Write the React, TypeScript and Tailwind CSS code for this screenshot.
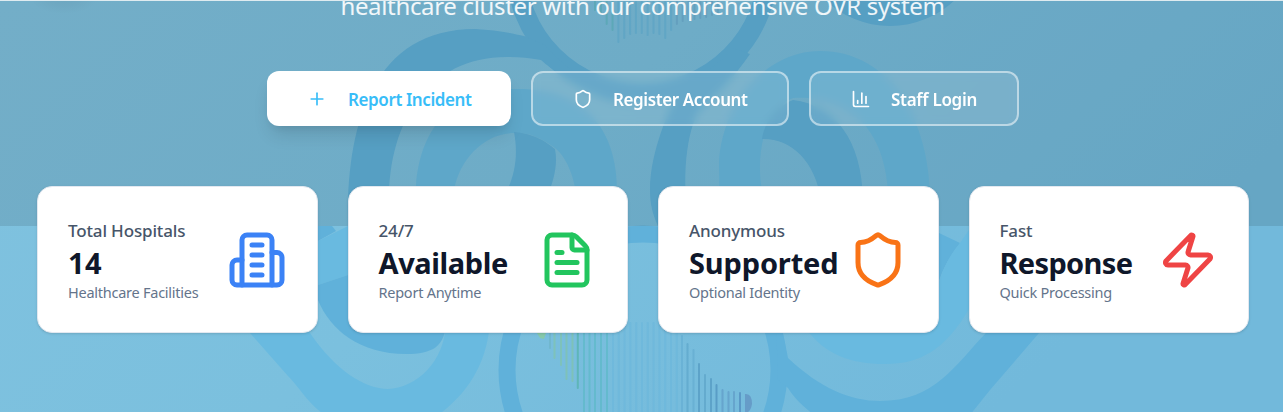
import type { ReactNode } from 'react';
import { ChartColumn, FileText, Plus, Shield, Zap } from 'lucide-react';

const DARK = '#60b1da';
const LIGHT = '#69bae0';

// [x, top, bottom, colour, opacity]
type Stripe = [number, number, number, string, number];

const upperEnds = [10, 12, 24, 30, 42, 38, 34, 33, 33, 35, 33, 34, 38, 30, 24, 21, 20, 19, 18, 17, 15, 13];
const upperStripes: Stripe[] = upperEnds.map((end, i) => [
  595 + i * 5.85,
  0,
  end,
  i < 4 ? '#4fb5b8' : i < 14 ? '#60b3da' : '#5793bd',
  i < 4 ? 0.45 : i < 14 ? 0.55 : 0.3,
]);

const lowerStripes: Stripe[] = [
  [550, 325, 348, '#6db3c8', 0.7],
  [554.5, 325, 358, '#80c3ac', 0.7],
  [561, 325, 365, '#80c3ac', 0.7],
  [566.5, 325, 379, '#80c3ac', 0.75],
  [572.5, 325, 381, '#80c3ac', 0.75],
  [577.8, 325, 388, '#5bb5b4', 0.9],
  ...[584, 589.5, 595, 601, 607].map((x): Stripe => [x, 325, 412, '#5db9c8', 0.75]),
  ...Array.from({ length: 12 }, (_, i): Stripe => [613 + i * 5.8, 323, 412, '#67b6db', 0.5]),
  [682, 336, 412, '#63acd2', 0.6],
  [687.5, 344, 412, '#5ca6cb', 0.7],
  [693.5, 350, 412, '#5ca6cb', 0.5],
  [699, 364, 412, '#5299c0', 0.7],
  [705, 375, 412, '#5299c0', 0.5],
  [711, 379, 412, '#5299c0', 0.7],
  [716.5, 385, 412, '#5295c0', 0.8],
  [722.5, 390, 412, '#5f9bc6', 0.7],
  [728.5, 392, 412, '#5f9bc6', 0.7],
  [734, 392, 412, '#5f9bc6', 0.7],
  [740, 393, 412, '#5590c0', 0.8],
];

function Backdrop() {
  return (
    <svg className="absolute inset-0 h-[412px] w-[1283px]" viewBox="0 0 1283 412" aria-hidden="true">
      <defs>
        <linearGradient id="sky" x1="0" y1="0" x2="1" y2="0.35">
          <stop offset="0" stopColor="#80c2df" />
          <stop offset="0.5" stopColor="#7bc0de" />
          <stop offset="1" stopColor="#72b9db" />
        </linearGradient>
        <radialGradient id="smudge">
          <stop offset="0" stopColor="#000" stopOpacity="0.05" />
          <stop offset="1" stopColor="#000" stopOpacity="0" />
        </radialGradient>
      </defs>
      <rect width="1283" height="412" fill="url(#sky)" />
      <ellipse cx="64" cy="-2" rx="34" ry="16" fill="url(#smudge)" />

      <circle cx="890" cy="-68" r="94" fill={DARK} />
      <circle cx="642" cy="-33" r="126" fill="none" stroke={DARK} strokeWidth="20" />

      <path
        fill={DARK}
        d="M348 226 C346 130 370 29 475 29 C495 30 512 33 524 36 L545 45 C570 75 600 90 640 95 C620 116 570 85 541 60 C530 58 520 57 510 57 C430 55 389 120 389 200 L389 226Z"
      />
      <path
        fill={LIGHT}
        d="M416 226 L416 186 C420 130 450 90 515 89 C585 88 617 130 617 190 L617 226 L577 226 C580 190 570 160 555 148 C540 137 530 133 515 133 C485 133 460 158 454 190 L454 226Z"
      />
      <path fill={DARK} d="M514 132 C536 134 546 142 555 149 C558 165 554 180 546 200 L502 200 C514 180 519 158 514 132Z" />

      <path
        fill={LIGHT}
        d="M720 226 L719 165 C720 110 762 51 820 51 C890 51 930 120 930 200 L928 226 L888 226 L888 190 C884 135 855 95 793 98 C762 110 756 160 762 190 L762 226Z"
      />
      <path
        fill={DARK}
        d="M793 100 C835 105 862 140 863 200 L821 200 C815 160 790 138 762 139 C764 125 774 108 793 100Z"
      />
      <path
        fill={DARK}
        d="M733 48 C718 66 698 78 680 84 C670 110 650 150 650 190 C650 205 653 215 658 226 L690 226 C682 190 684 140 698 112 C712 98 728 86 750 54Z"
      />

      <path fill={DARK} d="M318 226 L332 226 L336 231 L318 241Z" />
      <path fill={LIGHT} d="M318 241 L336 232 L348 226 L400 226 L400 265 L348 275 L318 285Z" />
      <path
        fill={LIGHT}
        d="M250 333 L245 320 L302 320 L310 333 C335 370 365 389 388 389 C415 388 446 363 446 320 L490 320 C488 360 470 392 438 415 L325 415 C308 404 300 388 288 376Z"
      />
      <path fill={DARK} d="M318 300 C330 330 360 354 406 354 C432 354 446 347 446 320 L400 270 L348 275 L318 285Z" />

      <circle cx="643" cy="370" r="136" fill="none" stroke={DARK} strokeWidth="17" />

      <path fill={DARK} d="M930 229 L939 233 L960 243 C950 256 943 268 939 281 L930 290Z" />
      <path
        fill={LIGHT}
        d="M960 243 L969 230 L985 226 L985 285 L969 309 C945 350 920 364 885 364 C850 364 825 354 807 330 L830 300 L935 300 C939 275 948 257 960 243Z"
      />
      <path
        fill={DARK}
        d="M776 320 L783 333 L788 358 C820 388 850 401 880 401 C935 401 955 365 986 333 L996 320 L1050 320 L1039 333 L990 390 L970 415 L814 415 C800 404 793 396 788 388 L778 380Z"
      />

      {[...upperStripes, ...lowerStripes].map(([x, top, bottom, color, opacity], i) => (
        <line key={i} x1={x} x2={x} y1={top} y2={bottom} stroke={color} strokeOpacity={opacity} strokeWidth="2" strokeLinecap="round" />
      ))}
      <path d="M745 394 Q752 393 752 404 Q751 410 748 412 L745 412Z" fill="#669cc8" />
      <path d="M535 330 L546 333 L544 339 L540 338Z" fill="#86c9ab" />
      <rect width="1283" height="226" fill="#000" fillOpacity="0.1" />
    </svg>
  );
}

const outline =
  'flex h-[55px] items-center rounded-[12px] border-2 border-white/50 bg-white/10 pl-[40px] text-white backdrop-blur-[4px]';

interface StatProps {
  label: string;
  value: string;
  note: string;
  icon: ReactNode;
  valueClass: string;
}

function StatCard({ label, value, note, icon, valueClass }: StatProps) {
  return (
    <div className="flex h-[147px] items-center justify-between rounded-[15px] border border-[#e2e8f0] bg-white px-[30px] shadow-sm">
      <div className="pt-px whitespace-nowrap">
        <p className="text-[17px] leading-[25px] font-medium tracking-[-0.15px] text-[#475569]">{label}</p>
        <p className={`text-[29px] leading-[40px] font-bold text-[#0f172a] ${valueClass}`}>{value}</p>
        <p className="-mt-px text-[14.5px] leading-[20px] tracking-[-0.25px] text-[#64748b]">{note}</p>
      </div>
      <div className="-ml-8 shrink-0">{icon}</div>
    </div>
  );
}

function HospitalIcon() {
  return (
    <svg width="60" height="60" viewBox="0 0 24 24" fill="none" stroke="#3b82f6" strokeWidth="2" strokeLinecap="round" strokeLinejoin="round">
      <path d="M6 22V4a2 2 0 0 1 2-2h8a2 2 0 0 1 2 2v18Z" />
      <path d="M6 12H4a2 2 0 0 0-2 2v6a2 2 0 0 0 2 2h2" />
      <path d="M18 9h2a2 2 0 0 1 2 2v9a2 2 0 0 1-2 2h-2" />
      <path d="M10 6h4M10 10h4M10 14h4M10 18h4" />
    </svg>
  );
}

export default function App() {
  return (
    <div className="relative h-[412px] w-[1283px] overflow-hidden font-['Noto_Sans','Open_Sans',sans-serif]">
      <Backdrop />
      <div className="relative flex flex-col">
        <div className="h-px bg-[#dfebf0]" />
        <div className="flex h-[70px] justify-center overflow-hidden">
          <p className="-mt-[13px] pl-[2px] text-[24px] leading-[35px] tracking-[-0.33px] whitespace-nowrap text-white/90">
            healthcare cluster with our comprehensive OVR system
          </p>
        </div>
        <div className="flex gap-[20px] pl-[267px] text-[17px] font-semibold tracking-[-0.4px] whitespace-nowrap">
          <button className="flex h-[55px] w-[244px] items-center gap-[21px] rounded-[12px] bg-white pl-[40px] text-[#38bdf8] shadow-[0_12px_18px_-4px_rgba(0,0,0,0.12),0_5px_8px_-5px_rgba(0,0,0,0.1)]">
            <Plus size={20} />
            <span className="pt-0.5">Report Incident</span>
          </button>
          <button className={`${outline} w-[258px] gap-[20px]`}>
            <Shield size={20} />
            <span className="pt-0.5">Register Account</span>
          </button>
          <button className={`${outline} w-[210px] gap-[20px]`}>
            <ChartColumn size={20} />
            <span className="pt-0.5 tracking-[-0.3px]">Staff Login</span>
          </button>
        </div>
        <div className="mt-[60px] ml-[37px] grid w-[1212px] grid-cols-4 gap-[30px]">
          <StatCard label="Total Hospitals" value="14" note="Healthcare Facilities" valueClass="tracking-[0.5px]" icon={<HospitalIcon />} />
          <StatCard
            label="24/7"
            value="Available"
            note="Report Anytime"
            valueClass="tracking-[-0.4px]"
            icon={<FileText size={60} color="#22c55e" />}
          />
          <StatCard
            label="Anonymous"
            value="Supported"
            note="Optional Identity"
            valueClass="tracking-[-0.15px]"
            icon={<Shield size={60} color="#f97316" />}
          />
          <StatCard
            label="Fast"
            value="Response"
            note="Quick Processing"
            valueClass="tracking-[-0.65px]"
            icon={<Zap size={60} color="#ef4444" />}
          />
        </div>
      </div>
    </div>
  );
}
